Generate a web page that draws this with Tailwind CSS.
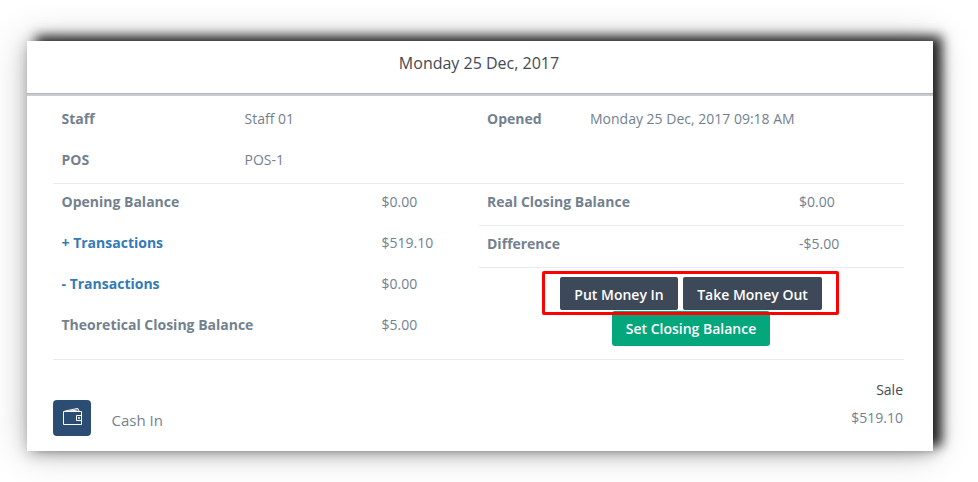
<!DOCTYPE html>
<html lang="en">
<head>
<meta charset="utf-8">
<title>Cash register</title>
<script src="https://cdn.jsdelivr.net/npm/@tailwindcss/browser@4"></script>
</head>
<body class="h-[482px] overflow-hidden bg-white pl-[27px] pt-[41px] font-['Open_Sans',sans-serif] text-[14px] leading-[20px] text-[#73818f]">
<main class="flex h-[410px] w-[906px] flex-col bg-white shadow-[9px_-5px_11px_rgba(0,0,0,0.82),0_0_34px_rgba(0,0,0,0.26),0_3px_14px_rgba(0,0,0,0.2)]">
  <header class="h-[55px] border-b-3 border-[#c9cdd1] text-center text-[16px] text-[#434a54]">
    <div class="h-[53px] border-b border-[#b0b5ba] pr-[2px] leading-[44px]">Monday 25 Dec, 2017</div>
  </header>
  <section class="ml-[26px] mt-[2px] grid h-[86px] w-[851px] grid-cols-[183px_242.5px_103px_1fr] auto-rows-[41px] content-start border-b border-[#e9ebed] pl-[8.5px] leading-[41px]">
    <b class="font-bold">Staff</b><span>Staff 01</span><b class="font-bold">Opened</b><span>Monday 25 Dec, 2017 09:18 AM</span>
    <b class="font-bold">POS</b><span>POS-1</span>
  </section>
  <section class="ml-[26px] flex h-[176px] w-[851px] border-b border-[#e7eaf0]">
    <div class="grid w-[426px] grid-cols-[320px_1fr] auto-rows-[41px] content-start pl-[8.5px] leading-[35px]">
      <b class="font-bold">Opening Balance</b><span>$0.00</span>
      <b class="font-bold text-[#337ab7]">+ Transactions</b><span>$519.10</span>
      <b class="font-bold text-[#337ab7]">- Transactions</b><span>$0.00</span>
      <b class="font-bold">Theoretical Closing Balance</b><span>$5.00</span>
    </div>
    <div class="w-[425px]">
      <div class="grid h-[42px] grid-cols-[312px_1fr] border-b border-[#e9ebed] pl-2 leading-[35px]"><b class="font-bold">Real Closing Balance</b><span>$0.00</span></div>
      <div class="grid h-[42px] grid-cols-[312px_1fr] border-b border-[#e9ebed] pl-2 leading-[35px]"><b class="font-bold">Difference</b><span>-$5.00</span></div>
      <div class="flex flex-col items-center gap-px pr-[1px] pt-[9px] font-semibold text-white">
        <div class="relative flex gap-[5px]">
          <button class="h-[33px] w-[118px] rounded-[2px] bg-[#3d4858] pt-[2px]">Put Money In</button>
          <button class="h-[33px] w-[139px] rounded-[2px] bg-[#3d4858] pt-[2px]">Take Money Out</button>
          <div class="absolute -left-[18px] -top-[6px] h-[44px] w-[297px] rounded-[2px] border-3 border-[#ff0000]"></div>
        </div>
        <button class="h-[35px] w-[158px] rounded-[3px] bg-[#04a67c]">Set Closing Balance</button>
      </div>
    </div>
  </section>
  <section class="ml-[26px] flex w-[850px] pt-[20px]">
    <div class="mt-[20px] flex h-[36px] w-[38px] items-start justify-center rounded-[4px] bg-[#2c4d73]">
      <svg class="ml-[2px] mt-[7px]" width="20" height="20" viewBox="0 0 20 20" fill="none" stroke="#fff" stroke-width="1">
        <path d="M.5 4.5h18v13H.5zM1.5 4.2 14.8 1.4l1.2 2.8M5.5 4.2l9-1.2M18.5 8.5h-5v5h5M15.5 10.5h1v1h-1z"/>
      </svg>
    </div>
    <div class="ml-[20.5px] mt-[30px] text-[15px]">Cash In</div>
    <div class="ml-auto text-right leading-[28px]"><div class="-mt-[4px] text-[#434a54]">Sale</div><div>$519.10</div></div>
  </section>
</main>
</body>
</html>
